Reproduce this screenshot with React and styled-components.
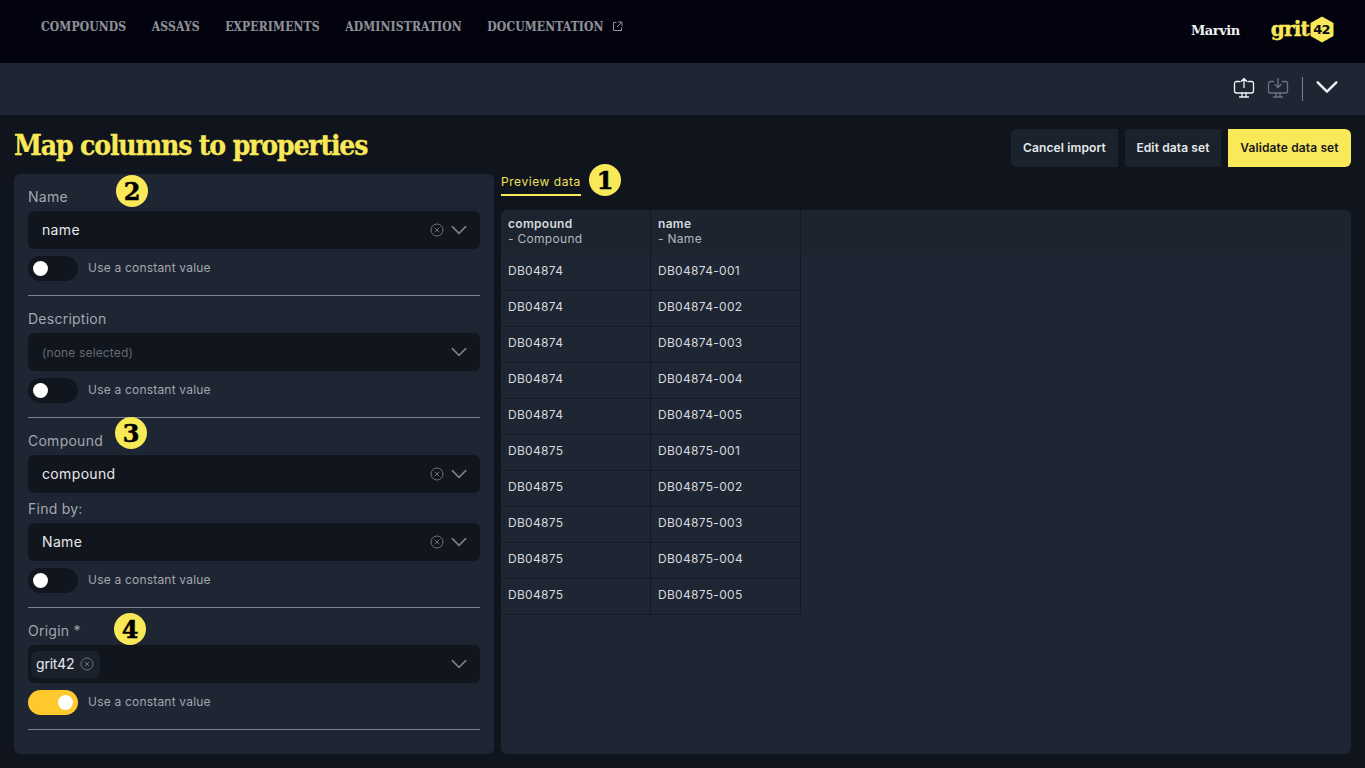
import React from 'react';
import styled, { createGlobalStyle } from 'styled-components';

const GlobalStyle = createGlobalStyle`
	html, body {
		margin: 0;
		padding: 0;
		height: 100%;
		background: #10141c;
		font-family: "Inter", "Liberation Sans", sans-serif;
		overflow: hidden;
	}
	* {
		box-sizing: border-box;
	}
`

const slab = '"DejaVu Serif", "Liberation Serif", serif';

const Page = styled.div`
	width: 1365px;
	height: 768px;
	display: flex;
	flex-direction: column;
	background: #10141c;
`

const Nav = styled.nav`
	height: 63px;
	flex: none;
	display: flex;
	align-items: flex-start;
	padding: 0 31px 0 41px;
	background: #02030e;
`

const NavLinks = styled.div`
	display: flex;
	gap: 25.5px;
	height: 53px;
	align-items: center;
	flex: 1;
`

const NavLink = styled.a`
	display: flex;
	align-items: center;
	gap: 8px;
	font-family: ${slab};
	font-stretch: condensed;
	font-weight: 700;
	font-size: 12px;
	color: #8f9096;
	letter-spacing: 0.15px;
	-webkit-text-stroke: 0.15px #8f9096;
	white-space: nowrap;
`

const User = styled.div`
	font-family: ${slab};
	font-weight: 700;
	font-size: 13px;
	letter-spacing: -0.45px;
	color: #f0f0f0;
	height: 61px;
	line-height: 61px;
	margin-right: 31px;
`

const Logo = styled.div`
	display: flex;
	align-items: center;
	height: 58px;
	gap: 1px;
`

const LogoWord = styled.span`
	font-family: ${slab};
	font-weight: 700;
	font-size: 20px;
	letter-spacing: -0.8px;
	color: #f9e858;
	-webkit-text-stroke: 0.4px #f9e858;
`

const SubBar = styled.div`
	height: 52px;
	flex: none;
	display: flex;
	align-items: center;
	justify-content: flex-end;
	padding-right: 24px;
	background: #1e2533;
`

const ToolIcon = styled.svg`
	width: 24px;
	height: 24px;
	margin: 0 10px 3px 0;
	fill: none;
	stroke: ${props => props.$muted ? '#6d7380' : '#f2f3f4'};
	stroke-width: 1.3;
	stroke-linecap: round;
	stroke-linejoin: round;
`

const BarDivider = styled.div`
	width: 1px;
	height: 24px;
	background: #7b808b;
	margin: 0 10px 0 2px;
`

const Chevron = styled.svg`
	width: ${props => props.$size}px;
	height: ${props => props.$size}px;
	margin-bottom: ${props => props.$lift}px;
	fill: none;
	stroke: ${props => props.$color};
	stroke-width: 2;
	stroke-linecap: round;
	stroke-linejoin: round;
	flex: none;
`

const Main = styled.main`
	flex: 1;
	position: relative;
	padding: 14px;
	display: grid;
	grid-template-columns: 480px 850px;
	grid-template-rows: 45px 580px;
	column-gap: 7px;
`

const Title = styled.h1`
	margin: 0;
	font-family: ${slab};
	font-stretch: condensed;
	font-weight: 700;
	font-size: 28px;
	line-height: 33px;
	letter-spacing: -1.14px;
	-webkit-text-stroke: 0.3px #f9e858;
	color: #f9e858;
`

const Actions = styled.div`
	display: flex;
	justify-content: flex-end;
	align-items: flex-start;
	gap: 7px;
`

const ActionButton = styled.button`
	width: ${props => props.$width}px;
	height: 38px;
	padding: 0 0 2px;
	border: none;
	border-radius: ${props => props.$radius};
	background: ${props => props.$primary ? '#f9e858' : '#1a222c'};
	color: ${props => props.$primary ? '#16181e' : '#e6e8ea'};
	font-family: "Inter", "Liberation Sans", sans-serif;
	font-weight: 600;
	font-size: 12px;
	letter-spacing: 0.12px;
`

const FormPanel = styled.section`
	position: relative;
	grid-row: 2;
	padding: 13px 14px 0;
	background: #1e2533;
	border-radius: 6px;
`

const Field = styled.div`
	position: relative;
	padding-bottom: 14px;
	margin-bottom: 13px;
	border-bottom: 1px solid #7b808b;
`

const Label = styled.label`
	display: block;
	height: 20px;
	line-height: 20px;
	margin-bottom: 4px;
	font-size: 14px;
	letter-spacing: 0.25px;
	color: #a3a7ae;
`

const SubLabel = styled(Label)`
	margin-top: 6px;
`

const Select = styled.div`
	height: 38px;
	display: flex;
	align-items: center;
	padding: 0 11px 0 ${props => props.$chip ? '3px' : '14px'};
	background: #11151d;
	border-radius: 6px;
`

const SelectValue = styled.span`
	flex: 1;
	padding-bottom: ${props => props.$empty ? '0' : '1px'};
	font-size: ${props => props.$empty ? '12px' : '14px'};
	letter-spacing: ${props => props.$empty ? '0.15px' : '0.35px'};
	color: ${props => props.$empty ? '#656a73' : '#e8e9eb'};
`

const ClearIcon = styled.svg`
	width: 14px;
	height: 14px;
	flex: none;
	fill: none;
	stroke: #6f737b;
	stroke-width: 1;
	margin-right: ${props => props.$gap}px;
`

const Chip = styled.span`
	height: 27px;
	display: flex;
	align-items: center;
	gap: 6px;
	padding: 0 6px 0 5px;
	margin-right: auto;
	border-radius: 6px;
	background: #1a212c;
	font-size: 14px;
	letter-spacing: -0.2px;
	color: #e8e9eb;
`

const ChipText = styled.span`
	padding-bottom: 2px;
`

const ToggleRow = styled.div`
	display: flex;
	align-items: center;
	gap: 10px;
	margin-top: 7px;
`

const Toggle = styled.span`
	width: 50px;
	height: 25px;
	display: flex;
	align-items: center;
	justify-content: ${props => props.$on ? 'flex-end' : 'flex-start'};
	padding: 0 5px;
	border-radius: 13px;
	background: ${props => props.$on ? '#ffc92e' : '#11151d'};

	&::after {
		content: '';
		width: 15px;
		height: 15px;
		border-radius: 50%;
		background: #fff;
	}
`

const ToggleText = styled.span`
	padding-bottom: 2px;
	font-size: 12px;
	letter-spacing: 0.2px;
	color: #a3a7ae;
`

const Badge = styled.span`
	position: absolute;
	left: ${props => props.$x}px;
	top: ${props => props.$y}px;
	width: 32px;
	height: 32px;
	display: flex;
	align-items: center;
	justify-content: center;
	border-radius: 50%;
	background: #f9e858;
	color: #000;
	font-family: ${slab};
	font-weight: 700;
	font-size: 24px;
	-webkit-text-stroke: 0.5px #000;
`

const PreviewColumn = styled.section`
	grid-row: 2;
	display: flex;
	flex-direction: column;
	min-height: 0;
`

const Tabs = styled.div`
	position: relative;
	display: flex;
	align-items: flex-start;
	height: 36px;
	flex: none;
`

const Tab = styled.span`
	height: 22px;
	line-height: 15px;
	font-size: 12px;
	letter-spacing: 0.55px;
	color: #f0e05a;
	border-bottom: 2px solid #f9e858;
`

const TablePanel = styled.div`
	height: 544px;
	background: #1e2533;
	border-radius: 6px;
	overflow: hidden;
`

const Table = styled.table`
	border-collapse: separate;
	border-spacing: 0;
	table-layout: fixed;
	width: 100%;
	color: #d8dadd;
	font-size: 12px;
	letter-spacing: 0.3px;
`

const HeadRow = styled.tr`
	height: 45px;
	background: #1c2430;
`

const HeadCell = styled.th`
	width: ${props => props.$fill ? 'auto' : '150px'};
	padding: 0 7px 3px;
	text-align: left;
	font-weight: 400;
	line-height: 15px;
	border-right: ${props => props.$fill ? 'none' : '1px solid #141a23'};
	color: #b4b7bd;

	& b {
		display: block;
		font-weight: 600;
		color: #d8dadd;
	}
`

const Cell = styled.td`
	height: 36px;
	padding: 0 7px 4px;
	border-right: 1px solid #141a23;
	border-bottom: 1px solid #141a23;
`

const Icon = {
	External: () => (
		<svg width="11" height="11" viewBox="0 0 11 11" fill="none" stroke="#8f9096" strokeWidth="1">
			<path d="M4.5 1.5H1.5V9.5H9.5V6.5M6 1H10V5M10 1L5 6" />
		</svg>
	),
	Down: ({ size = 20, color = '#7a7d84', lift = 0 }) => (
		<Chevron $size={size} $color={color} $lift={lift} viewBox="0 0 24 24">
			<path d="M4 8L12 16L20 8" />
		</Chevron>
	),
	Clear: ({ gap = 5 }) => (
		<ClearIcon $gap={gap} viewBox="0 0 14 14">
			<circle cx="7" cy="7" r="6" />
			<path d="M4.8 4.8L9.2 9.2M9.2 4.8L4.8 9.2" />
		</ClearIcon>
	),
}

const Toggler = ({ on }) => (
	<ToggleRow>
		<Toggle $on={on} />
		<ToggleText>Use a constant value</ToggleText>
	</ToggleRow>
)

const rows = ['DB04874', 'DB04875'].flatMap(id =>
	['001', '002', '003', '004', '005'].map(n => [id, `${id}-${n}`])
);

export default function App() {
	return (
		<Page>
			<GlobalStyle />
			<Nav>
				<NavLinks>
					<NavLink>COMPOUNDS</NavLink>
					<NavLink>ASSAYS</NavLink>
					<NavLink>EXPERIMENTS</NavLink>
					<NavLink>ADMINISTRATION</NavLink>
					<NavLink>DOCUMENTATION <Icon.External /></NavLink>
				</NavLinks>
				<User>Marvin</User>
				<Logo>
					<LogoWord>grit</LogoWord>
					<svg width="24" height="27" viewBox="0 0 24 27">
						<path d="M12 0.5L23.5 7V20L12 26.5L0.5 20V7Z" fill="#f9e858" />
						<text x="11.5" y="18" textAnchor="middle" fontFamily="DejaVu Sans" fontWeight="700" fontSize="13" letterSpacing="-0.7" fill="#0a0a10">42</text>
					</svg>
				</Logo>
			</Nav>
			<SubBar>
				<ToolIcon viewBox="0 0 24 24">
					<path d="M7.5 5.5H4.5A2 2 0 0 0 2.5 7.5V15A2 2 0 0 0 4.5 17H19.5A2 2 0 0 0 21.5 15V7.5A2 2 0 0 0 19.5 5.5H16.5" />
					<path d="M12 11.5V3M9 5.5L12 2.5L15 5.5M10 17V20.5M14 17V20.5M7.5 21H16.5" />
				</ToolIcon>
				<ToolIcon $muted viewBox="0 0 24 24">
					<path d="M7.5 5.5H4.5A2 2 0 0 0 2.5 7.5V15A2 2 0 0 0 4.5 17H19.5A2 2 0 0 0 21.5 15V7.5A2 2 0 0 0 19.5 5.5H16.5" />
					<path d="M12 2.5V11.5M9 8.5L12 11.5L15 8.5M10 17V20.5M14 17V20.5M7.5 21H16.5" />
				</ToolIcon>
				<BarDivider />
				<Icon.Down size={28} color="#f2f3f4" lift={4} />
			</SubBar>
			<Main>
				<Title>Map columns to properties</Title>
				<Actions>
					<ActionButton $width={107} $radius="6px 0 0 6px">Cancel import</ActionButton>
					<ActionButton $width={96} $radius="0">Edit data set</ActionButton>
					<ActionButton $width={123} $primary $radius="0 6px 6px 0">Validate data set</ActionButton>
				</Actions>
				<FormPanel>
					<Field>
						<Label>Name</Label>
						<Select>
							<SelectValue>name</SelectValue>
							<Icon.Clear />
							<Icon.Down />
						</Select>
						<Toggler />
					</Field>
					<Field>
						<Label>Description</Label>
						<Select>
							<SelectValue $empty>(none selected)</SelectValue>
							<Icon.Down />
						</Select>
						<Toggler />
					</Field>
					<Field>
						<Label>Compound</Label>
						<Select>
							<SelectValue>compound</SelectValue>
							<Icon.Clear />
							<Icon.Down />
						</Select>
						<SubLabel>Find by:</SubLabel>
						<Select>
							<SelectValue>Name</SelectValue>
							<Icon.Clear />
							<Icon.Down />
						</Select>
						<Toggler />
					</Field>
					<Field>
						<Label>Origin *</Label>
						<Select $chip>
							<Chip><ChipText>grit42</ChipText> <Icon.Clear gap={0} /></Chip>
							<Icon.Down />
						</Select>
						<Toggler on />
					</Field>
					<Badge $x={102} $y={1}>2</Badge>
					<Badge $x={101} $y={243}>3</Badge>
					<Badge $x={100} $y={439}>4</Badge>
				</FormPanel>
				<PreviewColumn>
					<Tabs>
						<Tab>Preview data</Tab>
						<Badge $x={88} $y={-10}>1</Badge>
					</Tabs>
					<TablePanel>
						<Table>
							<thead>
								<HeadRow>
									<HeadCell><b>compound</b>- Compound</HeadCell>
									<HeadCell><b>name</b>- Name</HeadCell>
									<HeadCell $fill />
								</HeadRow>
							</thead>
							<tbody>
								{rows.map(([compound, name]) => (
									<tr key={name}>
										<Cell>{compound}</Cell>
										<Cell>{name}</Cell>
										<td />
									</tr>
								))}
							</tbody>
						</Table>
					</TablePanel>
				</PreviewColumn>
			</Main>
		</Page>
	);
}
